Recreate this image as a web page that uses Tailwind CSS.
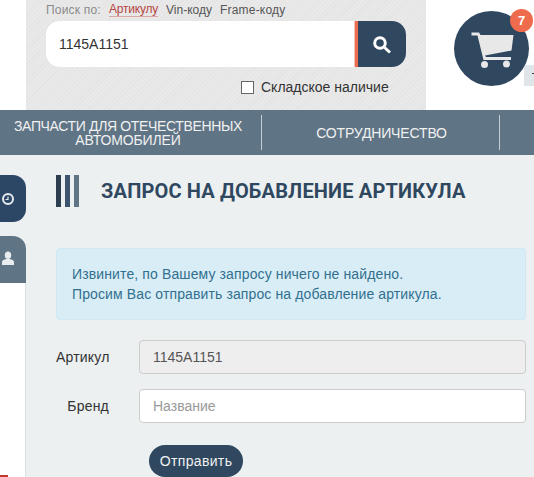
<!DOCTYPE html>
<html lang="ru">
<head>
<meta charset="UTF-8">
<title>Запрос на добавление артикула</title>
<script src="https://cdn.jsdelivr.net/npm/@tailwindcss/browser@4"></script>
</head>
<body class="bg-white overflow-hidden font-['Liberation_Sans',Arial,sans-serif] text-[#333]">
<div class="w-[534px] h-[477px] overflow-hidden flex flex-col">

  <!-- шапка -->
  <header class="flex h-[110px] shrink-0">
    <div class="ml-[26px] w-[400px] h-full bg-[repeating-linear-gradient(135deg,#e4e4e4_0,#e4e4e4_1px,#e9e9e9_1px,#e9e9e9_3px)] px-[20px] pt-[1px]">
      <div class="flex items-center h-[17px] text-[12px]">
        <span class="text-[#8b8b8b] tracking-[0.2px] mr-[8px]">Поиск по:</span>
        <span class="text-[#b5463f] border-b border-[#d9a9a5] leading-[14px] tracking-[-0.2px] mr-[8px]">Артикулу</span>
        <span class="text-[#555] mr-[8px]">Vin-коду</span>
        <span class="text-[#555] tracking-[0.2px]">Frame-коду</span>
      </div>
      <div class="mt-[3px] flex h-[46px] w-[360px] rounded-[14px] overflow-hidden bg-white">
        <div class="flex-1 pl-[13px] flex items-center text-[14px] text-[#333]">1145A1151</div>
        <div class="w-[1px] bg-[#f3c4b8]"></div>
        <div class="w-[3px] bg-[#ee6c4d]"></div>
        <button class="w-[48px] bg-[#2f4860] flex items-center justify-center">
          <svg width="20" height="20" viewBox="0 0 20 20" fill="none" stroke="white" class="mt-[2px]">
            <circle cx="8" cy="8" r="5.3" stroke-width="3"/>
            <path d="M12.5 12.5L18 17.5" stroke-width="3"/>
          </svg>
        </button>
      </div>
      <div class="mt-[13px] ml-[195px] flex items-center h-[16px] text-[14px]">
        <span class="w-[13px] h-[13px] border border-[#666] bg-white mr-[7px] mt-[-2px]"></span>
        <span class="mt-[-1px]">Складское наличие</span>
      </div>
    </div>
    <div class="relative ml-[28px] mt-[11px] w-[75px] h-[75px]">
      <div class="absolute left-[70px] top-[54px] w-[10px] h-[21px] bg-[#dfe5e9]">
        <span class="absolute right-0 top-[8px] w-[2px] h-[1px] bg-[#444]"></span>
      </div>
      <div class="absolute inset-0 rounded-full bg-[#2f4860] flex items-center justify-center">
        <svg width="48" height="40" viewBox="0 0 48 40">
          <path d="M3.5 3.5H11L12.5 6H45.5L43.5 21.5L17 26.5L18 28H43V31H15.5L9.5 6.5H3.5Z" fill="#e8e8e8"/>
          <circle cx="16.5" cy="35.5" r="3.5" fill="#e8e8e8"/>
          <circle cx="38.5" cy="35" r="3.5" fill="#e8e8e8"/>
        </svg>
      </div>
      <span class="absolute right-[-4px] top-[-2px] w-[23px] h-[23px] rounded-full bg-[#ee6c4d] text-white text-[13px] font-bold flex items-center justify-center">7</span>
    </div>
  </header>

  <!-- меню -->
  <nav class="h-[45px] shrink-0 bg-[#5f7485] flex items-center text-[#f1f1f1] text-[14px] leading-[14px]">
    <a class="w-[261px] pr-[5px] text-center"><span class="tracking-[-0.35px]">ЗАПЧАСТИ ДЛЯ ОТЕЧЕСТВЕННЫХ</span><br><span class="tracking-[-0.15px]">АВТОМОБИЛЕЙ</span></a>
    <span class="w-px h-[35px] bg-[#c5ced5]"></span>
    <a class="w-[237px] pl-[2px] text-center tracking-[-0.15px]">СОТРУДНИЧЕСТВО</a>
    <span class="w-px h-[35px] bg-[#c5ced5]"></span>
  </nav>

  <div class="flex flex-1 min-h-0 bg-[#ecf0f1]">
    <!-- боковые вкладки -->
    <aside class="w-[26px] shrink-0 flex flex-col">
      <div class="h-[128px] pt-[20px] flex flex-col gap-[14px] shrink-0">
        <div class="h-[47px] rounded-r-[13px] bg-[#2b4765] flex items-center justify-center">
          <svg width="14" height="14" viewBox="0 0 14 14" fill="none" stroke="#e8ecef" class="ml-[-11px]">
            <circle cx="7" cy="7" r="5" stroke-width="2"/>
            <path d="M7 4.5V7.5H4.5" stroke-width="1.2"/>
          </svg>
        </div>
        <div class="h-[47px] rounded-tr-[13px] bg-[#5f7485] flex items-center justify-center">
          <svg width="14" height="15" viewBox="0 0 14 15" fill="#e8ecef" class="ml-[-10px] mt-[-3px]">
            <ellipse cx="7" cy="4.2" rx="3.2" ry="3.8"/>
            <path d="M1 14V11C1 9.2 3.5 8.6 5 8H9C10.5 8.6 13 9.2 13 11V14Z"/>
          </svg>
        </div>
      </div>
      <div class="flex-1 bg-white border-r border-[#dde2e5] relative">
        <span class="absolute left-0 bottom-0 w-[8px] h-[2px] bg-[#c0392b]"></span>
      </div>
    </aside>

    <main class="flex-1 pl-[30px] pr-[8px]">
      <div class="flex items-center mt-[20px] h-[32px]">
        <div class="flex gap-[4px] h-[32px]">
          <span class="w-[5px] bg-[#2c3e50]"></span>
          <span class="w-[5px] bg-[#3d5470]"></span>
          <span class="w-[5px] bg-[#5f7485]"></span>
        </div>
        <h1 class="ml-[22px] text-[20px] font-bold text-[#2f4860] font-['Roboto',sans-serif] tracking-[0.17px] whitespace-nowrap">ЗАПРОС НА ДОБАВЛЕНИЕ АРТИКУЛА</h1>
      </div>

      <div class="mt-[41px] h-[72px] rounded-[4px] bg-[#d9edf7] border border-[#cfe8f3] pl-[15px] pt-[15px] text-[14px] leading-[20px] text-[#31708f] tracking-[0.12px]">
        Извините, по Вашему запросу ничего не найдено.<br>
        Просим Вас отправить запрос на добавление артикула.
      </div>

      <div class="mt-[20px] flex items-center h-[34px]">
        <label class="w-[83px] pr-[30px] text-right text-[14px] tracking-[0.2px] shrink-0">Артикул</label>
        <div class="flex-1 h-[34px] rounded-[4px] border border-[#ccc] bg-[#eee] pl-[13px] flex items-center text-[14px] text-[#555]">1145A1151</div>
      </div>
      <div class="mt-[15px] flex items-center h-[34px]">
        <label class="w-[83px] pr-[30px] text-right text-[14px] tracking-[0.2px] shrink-0">Бренд</label>
        <input placeholder="Название" class="flex-1 h-[34px] rounded-[4px] border border-[#ccc] bg-white pl-[13px] text-[14px] placeholder:text-[#999]">
      </div>
      <button class="block mt-[22px] ml-[93px] h-[32px] w-[94px] rounded-full bg-[#2f4860] text-[#f1f1f1] text-[14px] tracking-[0.35px]">Отправить</button>
    </main>
  </div>
</div>
</body>
</html>
